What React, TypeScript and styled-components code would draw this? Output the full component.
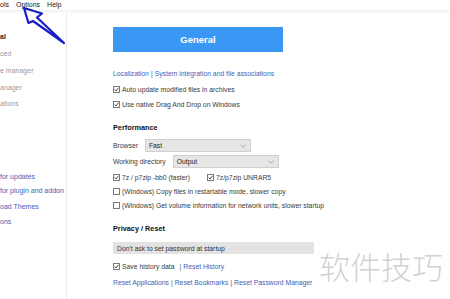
import styled, { createGlobalStyle } from "styled-components";

const GlobalStyle = createGlobalStyle`
  html, body {
    margin: 0;
    padding: 0;
    background: #ffffff;
  }
  body {
    font-family: "Liberation Sans", Arial, "Noto Sans CJK SC", sans-serif;
    color: #333333;
  }
`;

// Whole window crop
const Window = styled.div`
  position: relative;
  width: 450px;
  height: 299px;
  overflow: hidden;
  background: #ffffff;
  display: flex;
  flex-direction: column;
`;

const MenuBar = styled.div`
  height: 10px;
  display: flex;
  align-items: center;
  gap: 7px;
  font-size: 7px;
  color: #222;
  border-bottom: 1px solid #f0f0f0;
  box-shadow: 0 1px 3px rgba(0, 0, 0, 0.05);
`;

const MenuItem = styled.span`
  line-height: 10px;
`;

const Body = styled.div`
  flex: 1;
  display: flex;
  min-height: 0;
`;

const Sidebar = styled.div`
  width: 66px;
  flex-shrink: 0;
  border-right: 1px solid #ececec;
  margin-top: 2px;
  display: flex;
  flex-direction: column;
  font-size: 7px;
`;

const NavItem = styled.div<{ $gap: number; $active?: boolean; $link?: boolean }>`
  margin-top: ${(p) => p.$gap}px;
  height: 10px;
  line-height: 10px;
  white-space: nowrap;
  color: ${(p) => (p.$link ? "#3d63b8" : p.$active ? "#1c1c1c" : "#9a9a9a")};
  font-weight: ${(p) => (p.$active ? 700 : 400)};
`;

const Main = styled.div`
  flex: 1;
  padding-left: 46px;
  display: flex;
  flex-direction: column;
  font-size: 6.8px;
`;

const TabButton = styled.div`
  margin-top: 16px;
  width: 170px;
  height: 25px;
  background: #3b97f4;
  color: #ffffff;
  font-weight: 700;
  font-size: 9.5px;
  display: flex;
  align-items: center;
  justify-content: center;
`;

const Row = styled.div<{ $gap: number; $h?: number }>`
  margin-top: ${(p) => p.$gap}px;
  height: ${(p) => p.$h ?? 10}px;
  display: flex;
  align-items: center;
  white-space: nowrap;
  color: #3a3a3a;
`;

const Link = styled.span`
  color: #3d63b8;
`;

const Sep = styled.span`
  color: #555;
  margin: 0 2px;
`;

const SectionTitle = styled.div<{ $gap: number }>`
  margin-top: ${(p) => p.$gap}px;
  height: 10px;
  line-height: 10px;
  font-weight: 700;
  font-size: 7.3px;
  color: #111;
`;

const Box = styled.span`
  width: 7px;
  height: 7px;
  box-sizing: border-box;
  border: 1px solid #7a7a7a;
  background: #fff;
  margin-right: 2px;
  display: inline-flex;
  align-items: center;
  justify-content: center;
  flex-shrink: 0;
`;

const Label = styled.span<{ $w?: number }>`
  margin-right: 7px;
  width: ${(p) => (p.$w ? `${p.$w}px` : "auto")};
`;

const Select = styled.div<{ $w: number }>`
  width: ${(p) => p.$w}px;
  height: 13px;
  box-sizing: border-box;
  background: #e6e6e6;
  border: 1px solid #cfcfcf;
  display: flex;
  align-items: center;
  justify-content: space-between;
  padding: 0 4px 0 3px;
  color: #222;
`;

const Chevron = styled.svg`
  width: 6px;
  height: 4px;
`;

const GrayBar = styled.div`
  margin-top: 8px;
  width: 201px;
  height: 12px;
  background: #e3e3e3;
  display: flex;
  align-items: center;
  padding-left: 4px;
  box-sizing: border-box;
  color: #333;
`;

const Watermark = styled.div`
  position: absolute;
  left: 319px;
  top: 248px;
  font-family: "Noto Sans CJK SC", sans-serif;
  font-weight: 300;
  font-size: 31px;
  line-height: 36px;
  color: rgba(150, 150, 150, 0.45);
`;

const Arrow = styled.svg`
  position: absolute;
  left: 0;
  top: 0;
  width: 80px;
  height: 50px;
`;

function Check({ checked }: { checked?: boolean }) {
  return (
    <Box>
      {checked && (
        <svg width="5" height="5" viewBox="0 0 5 5">
          <path d="M0.6 2.6 L2 4 L4.5 0.8" fill="none" stroke="#333" strokeWidth="0.9" />
        </svg>
      )}
    </Box>
  );
}

function Dropdown({ value, width }: { value: string; width: number }) {
  return (
    <Select $w={width}>
      <span>{value}</span>
      <Chevron viewBox="0 0 6 4">
        <path d="M0.5 0.8 L3 3.2 L5.5 0.8" fill="none" stroke="#999" strokeWidth="0.8" />
      </Chevron>
    </Select>
  );
}

export default function App() {
  return (
    <>
      <GlobalStyle />
      <Window>
        <MenuBar>
          <MenuItem>ols</MenuItem>
          <MenuItem>Options</MenuItem>
          <MenuItem>Help</MenuItem>
        </MenuBar>
        <Body>
          <Sidebar>
            <NavItem $gap={19} $active>al</NavItem>
            <NavItem $gap={7}>ced</NavItem>
            <NavItem $gap={7}>e manager</NavItem>
            <NavItem $gap={7}>anager</NavItem>
            <NavItem $gap={6}>ations</NavItem>
            <NavItem $gap={63} $link>for updates</NavItem>
            <NavItem $gap={4} $link>for plugin and addon</NavItem>
            <NavItem $gap={6} $link>oad Themes</NavItem>
            <NavItem $gap={5} $link>ons</NavItem>
          </Sidebar>
          <Main>
            <TabButton>General</TabButton>
            <Row $gap={16}>
              <Link>Localization</Link>
              <Sep>|</Sep>
              <Link>System integration and file associations</Link>
            </Row>
            <Row $gap={6}>
              <Check checked />
              Auto update modified files in archives
            </Row>
            <Row $gap={5}>
              <Check checked />
              Use native Drag And Drop on Windows
            </Row>
            <SectionTitle $gap={14}>Performance</SectionTitle>
            <Row $gap={6} $h={13}>
              <Label>Browser</Label>
              <Dropdown value="Fast" width={106} />
            </Row>
            <Row $gap={3} $h={13}>
              <Label>Working directory</Label>
              <Dropdown value="Output" width={106} />
            </Row>
            <Row $gap={4}>
              <Check checked />
              <Label $w={78}>7z / p7zip -bb0 (faster)</Label>
              <Check checked />
              7z/p7zip UNRAR5
            </Row>
            <Row $gap={4}>
              <Check />
              (Windows) Copy files in restartable mode, slower copy
            </Row>
            <Row $gap={4}>
              <Check />
              (Windows) Get volume information for network units, slower startup
            </Row>
            <SectionTitle $gap={14}>Privacy / Reset</SectionTitle>
            <GrayBar>Don't ask to set password at startup</GrayBar>
            <Row $gap={7}>
              <Check checked />
              Save history data
              <Sep style={{ marginLeft: 5 }}>|</Sep>
              <Link>Reset History</Link>
            </Row>
            <Row $gap={6}>
              <Link>Reset Applications</Link>
              <Sep>|</Sep>
              <Link>Reset Bookmarks</Link>
              <Sep>|</Sep>
              <Link>Reset Password Manager</Link>
            </Row>
          </Main>
        </Body>
        <Watermark>软件技巧</Watermark>
        <Arrow viewBox="0 0 80 50">
          <path
            d="M24 8 L42 13.5 L37 17.5 L64 43 L33 21 L28.5 23 Z"
            fill="none"
            stroke="#1a1ec4"
            strokeWidth="2.2"
            strokeLinejoin="round"
          />
        </Arrow>
      </Window>
    </>
  );
}
